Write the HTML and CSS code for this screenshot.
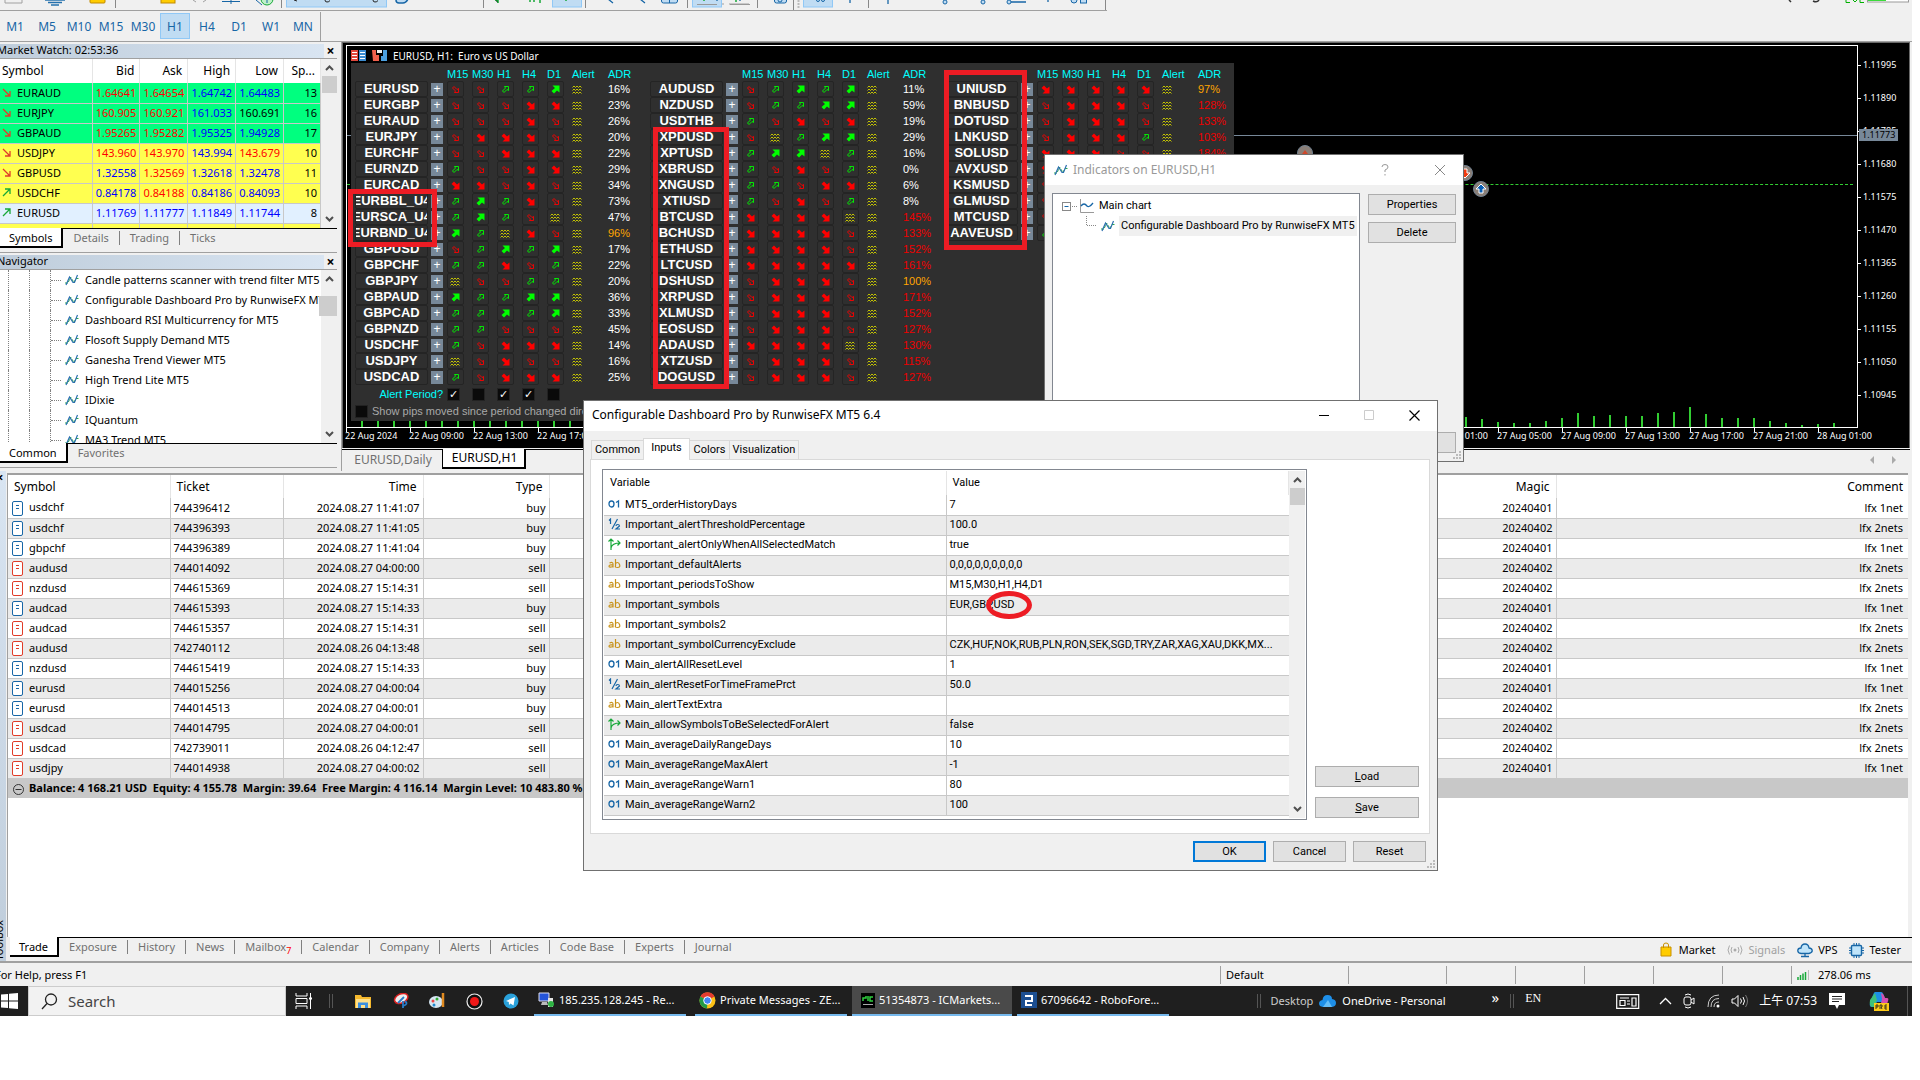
FILE: index.html
```html
<!DOCTYPE html>
<html lang="en">
<head>
<meta charset="utf-8">
<title>EURUSD,H1 - Trading Terminal</title>
<link rel="stylesheet" href="styles.css">
</head>
<body>
<svg class="defs" aria-hidden="true">
  <symbol id="r" viewBox="0 0 9 9"><path d="M1.5 3 3 1.5 6 4.5 7.500 3.500V7.500H3.500L4.500 6Z" fill="none" stroke="#f00" stroke-width=".9"/></symbol>
  <symbol id="R" viewBox="0 0 9 9"><path d="M.5 3 3 .5 6 3.500 8.500 1.500V8.500H1.500L4 6Z" fill="#f00"/></symbol>
  <symbol id="g" viewBox="0 0 9 9"><path d="M1.500 6 3 7.500 6 4.500 7.500 5.500V1.500H3.500L4.500 3Z" fill="none" stroke="#0f0" stroke-width=".9"/></symbol>
  <symbol id="G" viewBox="0 0 9 9"><path d="M.5 6 3 8.500 6 5.500 8.500 7.500V.5H1.500L4 3Z" fill="#0f0"/></symbol>
  <symbol id="w" viewBox="0 0 11 9"><path d="M.5 2.500 2 1 3.500 2.500 5 1 6.500 2.500 8 1 9.500 2.500M.5 5.500 2 4 3.500 5.500 5 4 6.500 5.500 8 4 9.500 5.500M.5 8.500 2 7 3.500 8.500 5 7 6.500 8.500 8 7 9.500 8.500" fill="none" stroke="#d2d200" stroke-width=".9"/></symbol>
  <symbol id="ind" viewBox="0 0 14 12"><path d="M0 9h3L5.500 3 9 8.500 11 4.500h3" fill="none" stroke="#2aa84a" stroke-dasharray="3 1"/><path d="M1 11 4.500 3l3.500 5.500h1.500L12.500 1" fill="none" stroke="#2c6fb0" stroke-width="1.200"/></symbol>
  <symbol id="doc" viewBox="0 0 11 15"><rect x=".5" y=".5" width="10" height="14" rx="1.500" fill="#fff" stroke="currentColor"/><path d="M4 4.500h3M4 7.500h3" stroke="currentColor"/></symbol>
  <symbol id="up" viewBox="0 0 9 6"><path d="M1 5 4.500 1.500 8 5" fill="none" stroke="#505050" stroke-width="2"/></symbol>
  <symbol id="down" viewBox="0 0 9 6"><path d="M1 1 4.500 4.500 8 1" fill="none" stroke="#505050" stroke-width="2"/></symbol>
  <symbol id="ti" viewBox="0 0 13 12"><ellipse cx="3.500" cy="6" rx="2.500" ry="3" fill="none" stroke="#1766a6" stroke-width="1.300"/><path d="M8 4.500 10.500 3v6.500" fill="none" stroke="#1766a6" stroke-width="1.300"/></symbol>
  <symbol id="td" viewBox="0 0 13 12"><path d="M1 2.500 2.500 1v5M9.500 1 4 11M8 8q0-1.500 1.700-1.500T11.500 8L8 11h4" fill="none" stroke="#1766a6" stroke-width="1.200"/></symbol>
  <symbol id="tb" viewBox="0 0 13 12"><path d="M3 12V1M.5 3.500 3 1l2.500 2.500M3 10q1-5 9-5M9.500 2.500 12 5 9.500 7.500" fill="none" stroke="#17a838" stroke-width="1.200"/></symbol>
  <symbol id="ts" viewBox="0 0 13 12"><path d="M1.500 5Q5 3.500 5 6v3.500M5 7Q1 6.500 1 8.200T5 8.500M7.500 1v8.500M7.500 6Q8 4.500 9.500 4.500T11.700 7 9.500 9.500 7.500 8" fill="none" stroke="#c8921a" stroke-width="1.200"/></symbol>
</svg>

<div class="app">
  <div class="toolbar">
    <svg width="1107" height="10" viewBox="0 0 1107 10">
      <g stroke="#a0a0a0" fill="none"><path d="M5 0v3h17V0M193 0l3 2M203 2l3-2M706 4h18M729 4h20"/></g>
      <path d="M45 0h20M48 2.500h14M51 5h8" stroke="#2571ad" stroke-width="1.500"/>
      <rect x="90" y="-5" width="15" height="8" rx="1" fill="#fc0" stroke="#c08a00"/>
      <rect x="161" y="-5" width="14" height="8" fill="#fc0" stroke="#c08a00"/>
      <path d="M222 1.500h18M231 0v4" stroke="#1766a6"/>
      <circle cx="267" cy="-1" r="6" fill="#bff0c8" stroke="#17a838"/><path d="M256 0l6 5M267-2v5" stroke="#1766a6"/>
      <path d="M115.500 0v8M281.500 0v8M483.500 0v8M585.500 0v8M687.500 0v8M757.500 0v8M793.500 0v10M868.500 0v8M1105.500 0v10" stroke="#888"/>
      <g fill="#c0dcf3" stroke="#90c8f6"><rect x="286.500" y="-3" width="100" height="10"/><rect x="552.500" y="-3" width="29" height="10"/><rect x="692.500" y="-3" width="29" height="10"/><rect x="803.500" y="-3" width="29" height="10"/></g>
      <path d="M294 0l3 1M325 0q0 2 2 2t3-1.500M373 0q0 2 2 2t3-1.500" stroke="#222" fill="none"/>
      <path d="M396 0q0 3 3 3h4q3 0 5-4" fill="#c0dcf3" stroke="#1766a6" stroke-width="1.500"/>
      <path d="M495 0h3v3M530 0v2M534 0v2M540 0v3M566 0v1M704 0v1M736 0v2" stroke="#17a838" stroke-width="1.500"/>
      <path d="M608-1l5 4M640-1l5 4M717 0v1M740 0v1M850 0v3M888 0v4M1048 0v2M1011 2h15" stroke="#1766a6" stroke-width="1.300"/>
      <path d="M697 4.500h20M730 4.500h20" stroke="#999"/>
      <g fill="#c0dcf3" stroke="#1766a6"><rect x="661.500" y="-6" width="16" height="9" rx="2"/><path d="M669.500 0v3"/><rect x="774.500" y="-6" width="12" height="9" rx="2"/><circle cx="780" cy="0" r="2"/><circle cx="818" cy="0" r="1.500"/><circle cx="823" cy="0" r="1.500"/><circle cx="945" cy="2" r="2"/><circle cx="983" cy="2" r="2"/><circle cx="1009" cy="2" r="2"/><circle cx="1074" cy="0" r="3"/><rect x="1080.500" y="-5" width="6" height="8"/></g>
      <path d="M798.500 0v9" stroke="#bbb" stroke-width="2" stroke-dasharray="2 1"/>
    </svg>
    <svg width="130" height="10" viewBox="0 0 130 10">
      <path d="M7 0l2 2M31 1q4 2 6-1" stroke="#333" fill="none" stroke-width="1.500"/><path d="M64 0v2.500h4M71 0l2 2 2-2M78 0v2.500h4" stroke="#00b000" fill="none"/>
      <rect x="85.500" y="-4" width="41" height="6" fill="#fff" stroke="#999"/><rect x="86" y="-4" width="18" height="5" fill="#3bdc3b"/>
    </svg>
  </div>
  <nav class="periods">
    <button>M1</button><button>M5</button><button>M10</button><button>M15</button><button>M30</button><button class="on">H1</button><button>H4</button><button>D1</button><button>W1</button><button>MN</button>
  </nav>

  <div class="workspace">
    <aside class="side">
      <section class="panel market">
        <header class="caption"><span>Market Watch: 02:53:36</span><button aria-label="Close">×</button></header>
        <div class="scrollbox watch">
          <table><thead><tr><th>Symbol</th><th>Bid</th><th>Ask</th><th>High</th><th>Low</th><th>Sp...</th></tr></thead><tbody id="quotes"></tbody></table>
          <div class="bar"><svg width="9" height="6"><use href="#up"/></svg><i></i><svg width="9" height="6"><use href="#down"/></svg></div>
        </div>
        <div class="tabs"><button class="on">Symbols</button><button>Details</button><button>Trading</button><button>Ticks</button></div>
      </section>
      <section class="panel navigator">
        <header class="caption"><span>Navigator</span><button aria-label="Close">×</button></header>
        <div class="scrollbox tree">
          <ul id="tree"></ul>
          <div class="bar low"><svg width="9" height="6"><use href="#up"/></svg><i></i><svg width="9" height="6"><use href="#down"/></svg></div>
        </div>
        <div class="tabs"><button class="on">Common</button><button>Favorites</button></div>
      </section>
    </aside>

    <main class="charts">
      <div class="chart">
        <div class="plot">
          <div class="priceline"></div>
          <div class="stopline"></div>
          <div class="volumes" id="volumes"></div>
          <svg class="marks" width="200" height="60" viewBox="0 0 200 60">
            <g fill="#8a7f78" stroke="#708090"><circle cx="8" cy="8" r="7.500"/><circle cx="168" cy="28" r="7.500"/><circle cx="184" cy="44" r="7.500"/></g>
            <path d="M8 5l-3 4h6Z" fill="#d0482a"/><path d="M8 9v5" stroke="#2a62a8" stroke-width="2"/><path d="M166 24h4v4h3l-5 5-5-5h3Z" fill="#f03a10" stroke="#fff"/><path d="M182 48h4v-4h3l-5-5-5 5h3Z" fill="#0a5fb4" stroke="#fff"/>
          </svg>
          <div class="plothead">
            <svg width="15" height="12" viewBox="0 0 15 12"><path d="M0 0h7v11H0Z" fill="#e0483c"/><path d="M8 0h7v11H8Z" fill="#3c8cd0"/><path d="M1 2.500h5M1 5.500h5M1 8.500h5M9 2.500h5M9 5.500h5M9 8.500h5" stroke="#fff"/></svg>
            <svg width="15" height="12" viewBox="0 0 15 12"><path d="M0 0h4v5h3v6H1Z" fill="#f0604c"/><path d="M11 0h4v11H9V6h2Z" fill="#4ca0e0"/><path d="M5 0h5v3H5Z" fill="#eee"/></svg>
            <span>EURUSD, H1:&nbsp; Euro vs US Dollar</span>
          </div>
          <div class="dash">
            <div class="groups" id="groups"></div>
            <div class="alertrow"><span>Alert Period?</span><input type="checkbox" aria-label="M15" checked><input type="checkbox" aria-label="M30"><input type="checkbox" aria-label="H1" checked><input type="checkbox" aria-label="H4" checked><input type="checkbox" aria-label="D1"></div>
            <label class="pips"><input type="checkbox">Show pips moved since period changed direction</label>
          </div>
        </div>
        <div class="prices"><span>1.11995</span><span>1.11890</span><span>1.11785</span><span>1.11680</span><span>1.11575</span><span>1.11470</span><span>1.11365</span><span>1.11260</span><span>1.11155</span><span>1.11050</span><span>1.10945</span><b>1.11773</b></div>
        <div class="times" id="times"></div>
        <div class="note n1"></div><div class="note n2"></div><div class="note n3"></div>
      </div>
      <div class="charttabs"><button>EURUSD,Daily</button><button class="on">EURUSD,H1</button><span></span><svg width="27" height="8" viewBox="0 0 27 8"><path d="M4 0v8L0 4ZM22 0v8l4-4Z" fill="#aaa"/></svg></div>
    </main>
  </div>

  <section class="toolbox">
    <div class="strip"><b>×</b><span>Toolbox</span></div>
    <div class="orders">
      <table><thead><tr><th>Symbol</th><th>Ticket</th><th>Time</th><th>Type</th><th></th><th>Magic</th><th>Comment</th></tr></thead><tbody id="orders"></tbody>
      <tfoot><tr><td colspan="7"><svg width="13" height="13" viewBox="0 0 13 13"><circle cx="6.500" cy="6.500" r="5" fill="none" stroke="#333"/><path d="M3.500 6.500h6" stroke="#333"/></svg><span>Balance: 4 168.21 USD&nbsp; Equity: 4 155.78&nbsp; Margin: 39.64&nbsp; Free Margin: 4 116.14&nbsp; Margin Level: 10 483.80 %</span></td></tr></tfoot></table>
    </div>
  </section>
  <div class="boxtabs">
    <div class="tabs"><button class="on">Trade</button><button>Exposure</button><button>History</button><button>News</button><button>Mailbox<sub>7</sub></button><button>Calendar</button><button>Company</button><button>Alerts</button><button>Articles</button><button>Code Base</button><button>Experts</button><button>Journal</button></div>
    <div class="services">
      <a href="#"><svg width="14" height="16" viewBox="0 0 14 16"><path d="M1 5h10v9H1Z" fill="#fc0" stroke="#c89000"/><path d="M3.500 6V3q0-2 2.500-2t2.500 2v3" fill="none" stroke="#c89000"/></svg>Market</a>
      <a href="#" class="off"><svg width="16" height="12" viewBox="0 0 16 12"><circle cx="8" cy="6" r="1.500" fill="#aaa"/><path d="M5 3q-2 3 0 6M2.500 1.500q-3 4.500 0 9M11 3q2 3 0 6M13.500 1.500q3 4.500 0 9" fill="none" stroke="#aaa"/></svg>Signals</a>
      <a href="#"><svg width="16" height="15" viewBox="0 0 16 15"><path d="M4 10.500Q.7 10 .8 7.500T4 5Q4.500 1 8 1t4 4q3 .3 3.200 2.500T12 10.500ZM8 11v3M4 13.500h8" fill="#bfe4fa" stroke="#1766a6" stroke-width="1.300"/></svg>VPS</a>
      <a href="#"><svg width="15" height="15" viewBox="0 0 15 15"><path d="M5 0v15M7.500 0v15M10 0v15M0 5h15M0 7.500h15M0 10h15" stroke="#1766a6"/><rect x="2.500" y="2.500" width="10" height="10" rx="1" fill="#bfe4fa" stroke="#1766a6" stroke-width="1.400"/></svg>Tester</a>
    </div>
  </div>
  <footer class="status"><span class="help">For Help, press F1</span><span class="c1">Default</span><span class="c2"></span><span class="c3"></span><span class="c3"></span><span class="c3"></span><span class="c3"></span><span class="c3"></span><span class="net"><svg width="13" height="10" viewBox="0 0 13 10"><path d="M1 10V7M3.500 10V5M6 10V3.500M8.500 10V2" stroke="#17a838" stroke-width="1.500"/><path d="M11.500 10V0" stroke="#bbb"/></svg>278.06 ms</span></footer>

  <div class="taskbar">
    <button class="start" aria-label="Start"><svg width="19" height="16" viewBox="0 0 19 16"><path d="M1 1.500 8 1v6.500H1ZM9 .8 18 0v7.500H9ZM1 8.500h7V15l-7-.5ZM9 8.500h9V16l-9-.8Z" fill="#fff"/></svg></button>
    <label class="search"><svg width="17" height="17" viewBox="0 0 17 17"><circle cx="10" cy="6.500" r="5.500" fill="none" stroke="#222" stroke-width="1.300"/><path d="M6 10.500 1 16" stroke="#222" stroke-width="1.300"/></svg><input type="text" placeholder="Search" aria-label="Search"></label>
    <div class="pins">
      <svg width="18" height="16" viewBox="0 0 18 16"><path d="M1 0v3h11V0M1 16v-3h11v3M1 5.500h11v5H1ZM15.500 0v16" fill="none" stroke="#fff"/><path d="M14 4.500h3v2h-3Z" fill="#fff"/></svg>
      <i class="grip"></i>
      <svg width="17" height="15" viewBox="0 0 17 15"><path d="M0 1h6l1 2h9v11H0Z" fill="#f5b92e"/><path d="M1 5h14v9H1Z" fill="#ffe08a"/><path d="M3 14V8.500h10V14h-3v-3H6v3Z" fill="#3b8fe0"/></svg>
      <svg width="17" height="16" viewBox="0 0 17 16"><ellipse cx="9" cy="5.500" rx="7" ry="4.500" fill="#eee" stroke="#d22" stroke-width="1.500" transform="rotate(-25 9 5)"/><path d="M6 10 12 4M11 8v7M13 8q4 3-2 5" stroke="#2a7cc8" fill="none" stroke-width="1.800"/></svg>
      <svg width="17" height="16" viewBox="0 0 17 16"><ellipse cx="7" cy="9" rx="7" ry="6" fill="#d6e6f2"/><circle cx="4" cy="8" r="1.500" fill="#e44"/><circle cx="8" cy="6" r="1.500" fill="#3a3"/><circle cx="5" cy="12" r="1.500" fill="#28c"/><path d="M14 0v14" stroke="#e08a20" stroke-width="2.500"/></svg>
      <svg width="17" height="17" viewBox="0 0 17 17"><circle cx="8.500" cy="8.500" r="7.500" fill="#111" stroke="#eee" stroke-width="1.200"/><circle cx="8.500" cy="8.500" r="4.500" fill="#f01818"/></svg>
      <svg width="16" height="16" viewBox="0 0 16 16"><circle cx="8" cy="8" r="7.500" fill="#2aa1da"/><path d="M3 8l9-4-1.500 8.500-3-2L6 12l-.2-3Z" fill="#fff"/></svg>
    </div>
    <div class="tasks">
      <button><svg width="17" height="16" viewBox="0 0 17 16"><path d="M1 1h10v8H1Z" fill="#2454d8" stroke="#dde"/><path d="M4 10h5l1 3H3Z" fill="#bbb"/><path d="M10 6h5v9h-5Z" fill="#e4e4e4"/><circle cx="13" cy="12" r="3" fill="#2fb344"/></svg>185.235.128.245 - Re...</button>
      <button><svg width="17" height="17" viewBox="0 0 17 17"><circle cx="8.500" cy="8.500" r="8" fill="#fbc116"/><path d="M8.500 8.500 1.500 4.500A8 8 0 0 1 15.500 4.500Z" fill="#e33b2e"/><path d="M8.500 8.500 1.500 4.500A8 8 0 0 0 8 16.500Z" fill="#229a48"/><circle cx="8.500" cy="8.500" r="3.800" fill="#4285f4" stroke="#fff"/></svg>Private Messages - ZE...</button>
      <button class="on"><svg width="14" height="15" viewBox="0 0 14 15"><path d="M0 0h14v15H0Z" fill="#000"/><path d="M2 8V5h3V3M7 3v5M12 4H9v4h3" stroke="#2fd03f" fill="none" stroke-width="1.500"/><path d="M2 11.500h10" stroke="#aaa"/></svg>51354873 - ICMarkets...</button>
      <button><svg width="16" height="16" viewBox="0 0 16 16"><path d="M0 0h16v16H0Z" fill="#1d4f91"/><path d="M4 4h7v5H5V13h6" stroke="#fff" fill="none" stroke-width="2"/></svg>67096642 - RoboFore...</button>
    </div>
    <div class="desk"><i class="grip"></i><span>Desktop</span><svg width="17" height="12" viewBox="0 0 17 12"><path d="M4 12Q0 11.500 0 8.500T3.500 5Q4 0 8.500 0T13 4q4 .5 4 4t-4 4Z" fill="#1e8fe8"/><path d="M4 12 9 5l4 7Z" fill="#64bdf7"/></svg><span class="lit">OneDrive - Personal</span></div>
    <div class="tray"><span class="more">»</span><i class="grip"></i><span class="lang">EN</span>
      <svg class="news" width="24" height="15" viewBox="0 0 24 15"><path d="M.7.700h22v13.600H.7ZM4 4h9M4 6.500h5v5H4ZM11 7h3M11 10h3M16 4h4v8h-4Z" fill="none" stroke="#fff" stroke-width="1.200"/></svg>
      <svg width="13" height="8" viewBox="0 0 13 8"><path d="M1 7 6.500 1.500 12 7" fill="none" stroke="#fff" stroke-width="1.300"/></svg>
      <svg width="13" height="16" viewBox="0 0 13 16"><rect x="1" y="4" width="7" height="8" rx="2" fill="none" stroke="#fff"/><path d="M8 7l3-2v6L8 9M2 2q3-2 6 0M2 14q3 2 6 0" fill="none" stroke="#fff"/></svg>
      <svg width="13" height="14" viewBox="0 0 13 14"><path d="M1 13Q1 1 12 1M4 13Q4 4.500 12 4.500M7 13q0-5 5-5" fill="none" stroke="#ccc"/><circle cx="11" cy="12" r="1.500" fill="#fff"/></svg>
      <svg width="17" height="14" viewBox="0 0 17 14"><path d="M1 5h2.500L7 1.500v11L3.500 9H1ZM9.500 4.500q2 2.500 0 5M12 3q3 4 0 8" fill="none" stroke="#fff"/><path d="M14.500 1q4 6 0 12" fill="none" stroke="#777"/></svg>
      <span class="clock">上午 07:53</span>
      <svg width="18" height="16" viewBox="0 0 18 16"><path d="M1 0h16v12h-6l-2 4-2-4H1Z" fill="#fff"/><path d="M4 3.500h10M4 6h10M4 8.500h7" stroke="#222"/></svg>
      <svg class="pilot" width="20" height="19" viewBox="0 0 20 19"><path d="M6 0h6q2 0 3 4l2 6H8L5 15H3Q0 15 1 11L4 3Q5 0 6 0Z" fill="#1b8fe4"/><path d="M12 1q3 1 4 5h2q2 0 1 3l-2 6h-6l2-8Z" fill="#d54fae"/><path d="M1 8 6 1 8 8 5 15H3Q0 14 1 8Z" fill="#3fc07a"/><path d="M5 11h15v8H5Z" fill="#ffcc18"/><path d="M7 17v-4h2v2H7M11 17v-4h2v2h-1l1 2M18 13h-2v4h2M16 15h2" stroke="#222" fill="none" stroke-width=".9"/></svg>
    </div>
  </div>
</div>

<section class="window indicators">
  <header><svg width="14" height="12"><use href="#ind"/></svg><span>Indicators on EURUSD,H1</span><svg width="8" height="12" viewBox="0 0 8 12"><path d="M1 3q0-2.500 3-2.500T7 3Q7 5 4 6v2M4 10v1.500" fill="none" stroke="#999"/></svg><svg width="12" height="12" viewBox="0 0 12 12"><path d="M1 1l10 10M11 1 1 11" stroke="#888"/></svg></header>
  <div class="body">
    <div class="list">
      <p class="root"><svg width="32" height="14" viewBox="0 0 32 14"><rect x=".5" y="3.500" width="8" height="8" fill="#fff" stroke="#888"/><path d="M2.500 7.500h4" stroke="#1766a6"/><path d="M10 7.500h5" stroke="#888" stroke-dasharray="1 1"/><path d="M18.500 0v13.500H32" fill="none" stroke="#999"/><path d="M19 7q3-4 6 0 2 2 6-3" fill="none" stroke="#1766a6" stroke-width="1.300"/></svg>Main chart</p>
      <p class="leaf"><svg width="11" height="14" viewBox="0 0 11 14"><path d="M.5 0v9.500H11" fill="none" stroke="#888" stroke-dasharray="1 1"/></svg><svg width="14" height="12"><use href="#ind"/></svg><span>Configurable Dashboard Pro by RunwiseFX MT5</span></p>
    </div>
    <div class="side-buttons"><button>Properties</button><button>Delete</button><button class="last">Close</button></div>
  </div>
  <svg class="resize" width="8" height="8" viewBox="0 0 8 8"><path d="M6 0h2v2H6ZM3 3h2v2H3ZM6 3h2v2H6ZM0 6h2v2H0ZM3 6h2v2H3ZM6 6h2v2H6Z" fill="#bbb"/></svg>
</section>

<section class="window config">
  <header><span>Configurable Dashboard Pro by RunwiseFX MT5 6.4</span><svg width="10" height="12" viewBox="0 0 10 12"><path d="M0 6.500h10" stroke="#000"/></svg><svg width="10" height="10" viewBox="0 0 10 10"><path d="M.5.500h9v9h-9Z" fill="none" stroke="#ccc"/></svg><svg width="11" height="11" viewBox="0 0 11 11"><path d="M.5.500l10 10M10.500.500l-10 10" stroke="#000" stroke-width="1.200"/></svg></header>
  <div class="pages"><button class="p1">Common</button><button class="p2 on">Inputs</button><button class="p3">Colors</button><button class="p4">Visualization</button></div>
  <div class="page">
    <div class="grid scrollbox">
      <table><thead><tr><th>Variable</th><th>Value</th></tr></thead><tbody id="vars"></tbody></table>
      <div class="bar"><svg width="9" height="6"><use href="#up"/></svg><i></i><svg width="9" height="6"><use href="#down"/></svg></div>
      <div class="ring"></div>
    </div>
    <div class="files"><button><u>L</u>oad</button><button><u>S</u>ave</button></div>
  </div>
  <div class="actions"><button class="ok">OK</button><button>Cancel</button><button>Reset</button></div>
  <svg class="resize" width="8" height="8" viewBox="0 0 8 8"><path d="M6 0h2v2H6ZM3 3h2v2H3ZM6 3h2v2H6ZM0 6h2v2H0ZM3 6h2v2H3ZM6 6h2v2H6Z" fill="#bbb"/></svg>
</section>
<script src="data.js"></script>
</body>
</html>
```
FILE: data.js
```js
const fill = (id, html) => { document.getElementById(id).innerHTML = html; };
const lines = text => text.trim().split("\n").map(l => l.trim().split(/\s+/));
const icon = (id, w, h, cls = "") => `<svg class="${cls}" width="${w}" height="${h}"><use href="#${id}"/></svg>`;

/* Quotes: row tone, direction, symbol, four prices with a colour letter, spread */
const tick = up => `<svg width="9" height="9" viewBox="0 0 9 9"><path d="${up ? "M1 8 8 1M3 1h5v5" : "M1 1l7 7M8 3v5H3"}" fill="none" stroke="${up ? "#17a838" : "#e03c28"}" stroke-width="1.300"/></svg>`;
fill("quotes", lines(`
green d EURAUD r1.64641 r1.64654 b1.64742 b1.64483 13
green d EURJPY r160.905 r160.921 b161.033 k160.691 16
green d GBPAUD r1.95265 r1.95282 b1.95325 b1.94928 17
yellow d USDJPY r143.960 r143.970 b143.994 r143.679 10
yellow d GBPUSD b1.32558 r1.32569 b1.32618 b1.32478 11
yellow u USDCHF b0.84178 r0.84188 b0.84186 b0.84093 10
blue u EURUSD b1.11769 b1.11777 b1.11849 b1.11744 8`).map(([tone, dir, sym, ...v]) => {
  const spread = v.pop();
  return `<tr class="${tone}"><td>${tick(dir === "u")}${sym}</td>${v.map(p => `<td class="c-${p[0]}">${p.slice(1)}</td>`).join("")}<td>${spread}</td></tr>`;
}).join("") + `<tr class="yellow"><td></td><td></td><td></td><td></td><td></td><td></td></tr>`);

fill("tree", ["Candle patterns scanner with trend filter MT5", "Configurable Dashboard Pro by RunwiseFX MT5", "Dashboard RSI Multicurrency for MT5", "Flosoft Supply Demand MT5", "Ganesha Trend Viewer MT5", "High Trend Lite MT5", "IDixie", "IQuantum", "MA3 Trend MT5"]
  .map(t => `<li><i></i><i></i><i class="branch"></i>${icon("ind", 14, 12)}<span>${t}</span></li>`).join(""));

/* Dashboard: symbol, one letter per period (r/g weak, R/G strong, w flat), range used */
const groups = [`
EURUSD rrggG 16
EURGBP rrrRR 23
EURAUD rrrRr 26
EURJPY rRRRr 20
EURCHF rrRRR 22
EURNZD grrRR 29
EURCAD RRrRr 34
EURBBL_U4 gGgRr 73
EURSCA_U4 gGgrw 47
EURBND_U4 GgwRr 96
GBPUSD rgGgG 17
GBPCHF ggRrg 22
GBPJPY wrrgg 20
GBPAUD GggGG 36
GBPCAD ggGgG 33
GBPNZD ggrrr 45
USDCHF grRRR 14
USDJPY wrRrr 16
USDCAD grRRR 25`, `
AUDUSD rgGgG 11
NZDUSD rggGG 59
USDTHB grRrR 19
XPDUSD rwgGG 29
XPTUSD gGGwg 16
XBRUSD grRrg 0
XNGUSD ggrRR 6
XTIUSD grRrg 8
BTCUSD RRRRw 145
BCHUSD RRRRr 133
ETHUSD RRRRr 152
LTCUSD RRRRR 161
DSHUSD rRRRr 100
XRPUSD rRRRr 171
XLMUSD rRRRr 152
EOSUSD rRRRr 127
ADAUSD RRRRw 130
XTZUSD rRRRr 115
DOGUSD rRRRr 127`, `
UNIUSD RRRRR 97
BNBUSD rRRRr 128
DOTUSD rRRRr 133
LNKUSD rRRRg 103
SOLUSD RRRrr 184
AVXUSD RRRRr 120
KSMUSD rRRRr 115
GLMUSD rRRRr 118
MTCUSD rRRRr 121
AAVEUSD gRRRr 109`];
const heat = n => n > 100 ? "hot" : n > 90 ? "warm" : "";
fill("groups", groups.map(g => `<div class="group"><div class="line head"><span></span><span></span>${["M15", "M30", "H1", "H4", "D1"].map(p => `<span>${p}</span>`).join("")}<span class="alert">Alert</span><span>ADR</span></div>${
  lines(g).map(([s, p, n]) => `<div class="line"><button class="sym"><span>${s}</span></button><button class="plus">+</button>${[...p].map(c => `<span class="cell">${icon(c, c === "w" ? 11 : 9, 9)}</span>`).join("")}<span class="alert">${icon("w", 11, 9)}</span><span class="adr ${heat(+n)}">${n}%</span></div>`).join("")}</div>`).join(""));

/* Hourly volumes and the time axis, one label every four bars */
const recent = [10, 8, 5, 4, 4, 6, 9, 14, 11, 12, 11, 11, 14, 15, 20, 13, 9, 9, 9, 6, 4, 2, 3, 4];
fill("volumes", [...Array(69).fill(6), ...recent].map(h => `<i style="height:${h}px"></i>`).join(""));
const times = ["22 Aug 2024", "22 Aug 09:00", "22 Aug 13:00", "22 Aug 17:00", "22 Aug 21:00"];
for (const d of [23, 26, 27]) for (const h of ["01", "05", "09", "13", "17", "21"]) times.push(`${d} Aug ${h}:00`);
times.push("28 Aug 01:00");
fill("times", times.map(t => `<span>${t}</span>`).join(""));

fill("orders", lines(`
usdchf 744396412 27 11:41:07 buy 1
usdchf 744396393 27 11:41:05 buy 2
gbpchf 744396389 27 11:41:04 buy 1
audusd 744014092 27 04:00:00 sell 2
nzdusd 744615369 27 15:14:31 sell 2
audcad 744615393 27 15:14:33 buy 1
audcad 744615357 27 15:14:31 sell 2
audusd 742740112 26 04:13:48 sell 2
nzdusd 744615419 27 15:14:33 buy 1
eurusd 744015256 27 04:00:04 buy 1
eurusd 744014513 27 04:00:01 buy 2
usdcad 744014795 27 04:00:01 sell 2
usdcad 742739011 26 04:12:47 sell 2
usdjpy 744014938 27 04:00:02 sell 1`).map(([s, t, d, h, type, n]) =>
  `<tr class="${type}"><td>${icon("doc", 11, 15)}${s}</td><td>${t}</td><td>2024.08.${d} ${h}</td><td>${type}</td><td></td><td>2024040${n}</td><td>lfx ${n === "1" ? "1net" : "2nets"}</td></tr>`).join(""));

fill("vars", [["i", "MT5_orderHistoryDays", "7"], ["d", "Important_alertThresholdPercentage", "100.0"], ["b", "Important_alertOnlyWhenAllSelectedMatch", "true"], ["s", "Important_defaultAlerts", "0,0,0,0,0,0,0,0,0"], ["s", "Important_periodsToShow", "M15,M30,H1,H4,D1"], ["s", "Important_symbols", "EUR,GBP,USD"], ["s", "Important_symbols2", ""], ["s", "Important_symbolCurrencyExclude", "CZK,HUF,NOK,RUB,PLN,RON,SEK,SGD,TRY,ZAR,XAG,XAU,DKK,MX..."], ["i", "Main_alertAllResetLevel", "1"], ["d", "Main_alertResetForTimeFramePrct", "50.0"], ["s", "Main_alertTextExtra", ""], ["b", "Main_allowSymbolsToBeSelectedForAlert", "false"], ["i", "Main_averageDailyRangeDays", "10"], ["i", "Main_averageRangeMaxAlert", "-1"], ["i", "Main_averageRangeWarn1", "80"], ["i", "Main_averageRangeWarn2", "100"]]
  .map(([t, k, v]) => `<tr><td>${icon("t" + t, 13, 12)}${k}</td><td>${v}</td></tr>`).join(""));
```
FILE: styles.css
```css
* { box-sizing: border-box; }
body { margin: 0; background: #fff; color: #000; font: 11px/16px "Noto Sans", "Open Sans", "Noto Sans CJK TC", sans-serif; overflow: hidden; position: relative; }
button { font: inherit; color: inherit; background: none; border: 0; padding: 0; margin: 0; }
a { color: inherit; text-decoration: none; }
svg { display: block; flex: none; }
table { border-collapse: collapse; border-spacing: 0; table-layout: fixed; width: 100%; }
th { font-weight: 400; text-align: left; }
ul, p { margin: 0; padding: 0; list-style: none; }
.defs { position: absolute; width: 0; height: 0; }
.app { margin-right: 8px; background: #f0f0f0; display: flex; flex-direction: column; }

/* Toolbars */
.toolbar { height: 12px; display: flex; justify-content: space-between; }
.toolbar svg:first-child { border-bottom: 1px solid #a0a0a0; height: 11px; }
.periods { width: 321px; height: 29px; padding-top: 1px; display: flex; border-right: 1px solid #a0a0a0; }
.periods button { width: 30px; height: 26px; margin-right: 2px; padding-top: 2px; color: #1766a6; font-size: 12px; border: 1px solid transparent; flex: none; }
.periods button.on { background: #c0dcf3; border-color: #90c8f6; }

/* Side panels */
.workspace { display: flex; border-top: 1px solid #a0a0a0; height: 430px; }
.side { width: 342px; flex: none; display: flex; flex-direction: column; border-right: 1px solid #a0a0a0; }
.panel { border-bottom: 1px solid #a0a0a0; margin-right: 4px; padding-top: 2px; }
.market { height: 211px; }
.navigator { height: 215px; }
.caption { display: flex; height: 15px; justify-content: space-between; border-bottom: 1px solid #a0a0a0; line-height: 12px; }
.caption span { flex: 1; text-indent: -3px; overflow: hidden; background: linear-gradient(90deg, #bfcddb, #d9e5f2); }
.caption button { width: 13px; font-weight: 700; font-size: 14px; line-height: 12px; }
.scrollbox { display: flex; background: #fff; overflow: hidden; }
.bar { width: 16px; flex: none; background: #f0f0f0; display: flex; flex-direction: column; align-items: center; padding: 6px 0; }
.bar i { width: 15px; height: 17px; margin: 5px 0 auto; background: #cdcdcd; }
.bar.low i { margin-top: 14px; }
.watch { height: 169px; }
.watch table { width: 321px; flex: none; }
.watch th { height: 24px; padding: 0 5px; font-size: 12px; border-right: 1px solid #e5e5e5; text-align: right; overflow: hidden; white-space: nowrap; }
.watch th:first-child { width: 92px; text-align: left; padding-left: 2px; }
.watch th:last-child { width: 37px; }
.watch td { height: 20px; padding: 0 3px; text-align: right; border: 1px solid #c8c8c8; border-width: 0 1px 1px 0; }
.watch td:first-child { text-align: left; padding-left: 2px; }
.watch td svg { display: inline-block; margin-right: 6px; }
.green { background: #00ff7f; }
.yellow { background: #ffff50; }
.blue { background: #e1f0ff; }
.c-r { color: #f00; }
.c-b { color: #00f; }
.tabs { display: flex; border-top: 1px solid #000; height: 20px; color: #707070; }
.tabs button { padding: 0 10px; height: 14px; margin-top: 2px; line-height: 14px; border-right: 1px solid #808080; }
.tabs button:last-child { border: 0; }
.tabs button.on { margin-top: -1px; padding: 0 9px; height: 20px; line-height: 19px; background: #fff; color: #000; border: 1px solid #000; border-width: 0 2px 2px 0; }
.tabs sub { color: #f00; font-size: 9px; line-height: 0; }
.tree { height: 173px; }
.tree ul { width: 321px; flex: none; overflow: hidden; }
.tree li { height: 20px; display: flex; align-items: center; white-space: nowrap; }
.tree i { width: 21px; height: 20px; flex: none; border-right: 1px dotted #808080; }
.tree i:first-child { width: 9px; }
.tree li svg { margin: 0 6px 0 14px; }
.tree .branch { position: relative; }
.tree .branch::after { content: ""; position: absolute; left: 21px; top: 10px; width: 10px; border-top: 1px dotted #808080; }

/* Chart */
.charts { flex: 1; min-width: 0; margin-right: 2px; }
.chart { position: relative; height: 406px; background: #000; border: 1px solid #696969; border-bottom: 0; color: #fff; display: grid; grid-template: 385px 20px / 1fr 51px; overflow: hidden; }
.plot { position: relative; margin: 2px 0 0 3px; border: 1px solid #fff; overflow: hidden; }
.plothead { display: flex; align-items: center; gap: 6px; height: 18px; padding: 2px 0 0 4px; }
.plothead span { font-size: 10px; }
.priceline { position: absolute; left: 0; right: 0; top: 89px; border-top: 1px solid #778899; }
.stopline { position: absolute; left: 0; right: 4px; top: 138px; border-top: 1px dashed #32cd32; }
.volumes { position: absolute; left: 14px; bottom: 0; display: flex; align-items: flex-end; }
.volumes i { width: 2px; margin-right: 14px; background: #32cd32; flex: none; }
.marks { position: absolute; right: 360px; top: 99px; }
.prices { position: relative; display: flex; flex-direction: column; gap: 17px; padding-top: 14px; font-size: 9px; }
.prices span { height: 16px; padding-left: 5px; display: flex; align-items: center; }
.prices span::before { content: ""; width: 3px; margin-left: -5px; margin-right: 2px; border-top: 1px solid #fff; }
.prices b { position: absolute; left: 1px; top: 86px; padding: 0 3px; font-weight: 400; line-height: 12px; background: #778899; color: #000; }
.times { grid-column: 1 / 3; display: flex; padding-left: 2px; font-size: 9px; line-height: 16px; }
.times span { width: 64px; flex: none; white-space: nowrap; position: relative; }
.times span::before { content: ""; position: absolute; left: 1px; top: 0; height: 4px; border-left: 1px solid #fff; }
.dash { position: absolute; left: 4px; top: 17px; width: 883px; height: 358px; background: #2f2f2f; padding: 2px 4px; font: 11px/16px "Liberation Sans", Arial, sans-serif; }
.groups { display: flex; gap: 5px; }
.group { width: 290px; flex: none; }
.line { display: grid; grid-template-columns: 76px 16px repeat(5, 25px) 36px 1fr; height: 16px; align-items: center; white-space: nowrap; }
.line.head { color: #0ff; line-height: 18px; }
.sym { width: 73px; height: 16px; border: 1px solid #242424; border-radius: 2px; font-size: 13px; font-weight: 700; line-height: 14px; overflow: hidden; display: flex; justify-content: center; }
.plus { width: 12px; height: 13px; background: #778899; font-size: 12px; line-height: 12px; color: #fff; }
.cell { width: 17px; height: 16px; border: 1px solid #242424; border-radius: 2px; display: grid; place-items: center; }
.adr.hot { color: #e00; }
.adr.warm { color: #ffa500; }
.alertrow { display: flex; align-items: center; height: 18px; color: #0ff; }
.alertrow span { width: 92px; padding-right: 4px; text-align: right; }
.dash input { appearance: none; width: 13px; height: 13px; margin: 0 12px 0 0; background: #0a0a0a; border: 1px solid #222; display: grid; place-items: center; }
.dash input:checked::before { content: "✓"; color: #fff; font: 11px/12px "DejaVu Sans", sans-serif; }
.pips { display: flex; align-items: center; color: #a9a9a9; height: 16px; width: 300px; overflow: hidden; white-space: nowrap; }
.pips input { margin-right: 4px; }
.note { position: absolute; border: 5px solid #ed1c24; }
.n1 { left: 5px; top: 146px; width: 89px; height: 58px; }
.n2 { left: 310px; top: 84px; width: 76px; height: 262px; }
.n3 { left: 601px; top: 27px; width: 83px; height: 180px; }
.charttabs { display: flex; height: 22px; margin-top: 1px; color: #707070; line-height: 18px; }
.charttabs button, .charttabs span { border-top: 1px solid #000; height: 21px; }
.charttabs button { width: 100px; padding-left: 2px; font-size: 12px; }
.charttabs button.on { width: 84px; height: 20px; background: #fff; color: #000; border: 1px solid #000; border-width: 0 2px 2px 1px; }
.charttabs span { flex: 1; }
.charttabs svg { border-top: 1px solid #000; height: 21px; width: 40px; padding: 6px 13px 6px 0; overflow: visible; }

/* Toolbox */
.toolbox { display: flex; height: 466px; }
.strip { width: 7px; flex: none; margin-bottom: -24px; overflow: hidden; background: linear-gradient(#d9e5f2, #bfcddb); border-right: 1px solid #f0f0f0; display: flex; flex-direction: column; justify-content: space-between; }
.strip b { line-height: 12px; font-size: 13px; margin-left: -4px; }
.strip span { writing-mode: vertical-rl; transform: rotate(180deg); margin-left: -9px; width: 16px; }
.orders { flex: 1; min-width: 0; background: #fff; border: 1px solid #a0a0a0; border-width: 2px 0 0 1px; margin: 2px 4px 0 0; }
.orders th { height: 23px; padding: 0 6px; font-size: 12px; border-right: 1px solid #e5e5e5; }
.orders td { height: 20px; padding: 0 3px; border: 1px solid #c8c8c8; border-width: 0 1px 1px 0; }
.orders td:last-child, .orders th:last-child { border-right: 0; padding-right: 5px; }
.orders :is(th, td):nth-child(n+3) { text-align: right; }
.orders th:nth-child(1) { width: 162px; }
.orders th:nth-child(2) { width: 113px; }
.orders th:nth-child(3) { width: 140px; }
.orders th:nth-child(4) { width: 126px; }
.orders th:nth-child(6) { width: 140px; }
.orders th:nth-child(7) { width: 352px; }
.orders tbody tr:nth-child(even) { background: #ebebeb; }
.orders td svg { display: inline-block; vertical-align: middle; margin: 0 6px 0 1px; }
.buy svg { color: #1766a6; }
.sell svg { color: #e03c28; }
.orders tfoot td { height: 20px; background: #c8c8c8; border: 0; font-weight: 700; white-space: nowrap; }
.orders tfoot svg { margin-right: 4px; }
.boxtabs { display: flex; justify-content: space-between; height: 26px; border-bottom: 2px solid #a0a0a0; padding-left: 10px; }
.boxtabs .tabs { flex: 1; }
.services { display: flex; gap: 12px; padding: 4px 11px 0 0; border-top: 1px solid #000; }
.services a { display: flex; gap: 5px; align-items: center; height: 16px; }
.services .off { color: #a0a0a0; }

.status { display: flex; height: 23px; padding: 3px 0 2px; line-height: 18px; }
.status span { border-left: 1px solid #a0a0a0; padding-left: 5px; white-space: nowrap; }
.status .help { flex: 1; border: 0; padding: 0; text-indent: -5px; overflow: hidden; }
.status .c1 { width: 128px; }
.status .c2 { width: 98px; }
.status .c3 { width: 69px; }
.status .net { width: 121px; display: flex; align-items: center; gap: 8px; }

/* Taskbar */
.taskbar { display: flex; height: 30px; background: #1f1f1f; color: #fff; align-items: stretch; }
.start { width: 28px; flex: none; }
.search { width: 258px; flex: none; display: flex; align-items: center; gap: 10px; padding-left: 12px; background: #f2f2f2; border: 1px solid #ccc; }
.search input { border: 0; background: none; outline: 0; width: 200px; padding: 0; font: 15px/20px "Noto Sans", sans-serif; }
.search input::placeholder { color: #444; opacity: 1; }
.pins { display: flex; align-items: center; gap: 20px; padding: 0 15px 0 9px; }
.pins .grip { margin: 0 2px 0 -4px; }
.grip { width: 4px; height: 14px; border: 1px solid #555; border-width: 0 1px; flex: none; align-self: center; }
.tasks { display: flex; gap: 9px; }
.tasks button { width: 152px; padding-left: 4px; display: flex; align-items: center; gap: 4px; border-bottom: 2px solid #76b9ed; white-space: nowrap; }
.tasks button.on { background: #4a4a4a; width: 160px; margin: 0 -4px; padding-left: 9px; }
.desk { flex: 1; display: flex; align-items: center; justify-content: flex-end; gap: 6px; color: #ccc; margin-right: 46px; white-space: nowrap; }
.desk .grip { margin-right: 4px; }
.desk .lit { color: #fff; }
.tray { display: flex; align-items: center; gap: 11px; padding-right: 18px; margin-right: 4px; border-right: 1px solid #555; white-space: nowrap; }
.tray .more { font-size: 15px; line-height: 10px; margin-bottom: 8px; }
.lang { font: 12px "Liberation Serif", serif; margin-bottom: 6px; }
.clock { font-size: 12px; }
.news { margin: 0 8px 0 64px; }
.pilot { margin-left: 12px; }

/* Windows */
.window { position: absolute; background: #f0f0f0; border: 1px solid #707070; font: 11px/16px Roboto, "Noto Sans", sans-serif; }
.window header { height: 30px; background: #fff; display: flex; align-items: center; font: 12px/16px "Noto Sans", sans-serif; padding-bottom: 2px; }
.window header span { flex: 1; }
.window button { height: 21px; border: 1px solid #adadad; background: #e1e1e1; }
.resize { position: absolute; right: 2px; bottom: 2px; }
.indicators { left: 1044px; top: 154px; width: 420px; height: 308px; }
.indicators header { color: #999; padding: 0 17px 0 9px; gap: 5px; }
.indicators header svg:nth-of-type(2) { margin-right: 5px; }
.indicators header svg:last-child { margin-left: 35px; }
.indicators .body { display: flex; padding: 8px 7px 8px; gap: 8px; height: 276px; }
.list { flex: 1; min-width: 0; background: #fff; border: 1px solid #828790; padding: 2px 2px 2px 9px; }
.list p { display: flex; align-items: center; height: 20px; white-space: nowrap; }
.list .root svg { margin-right: 5px; }
.list .leaf { padding-left: 24px; gap: 4px; }
.leaf svg:first-child { align-self: flex-start; }
.leaf span { background: #f0f0f0; line-height: 20px; padding: 0 2px; }
.side-buttons { width: 88px; flex: none; display: flex; flex-direction: column; gap: 7px; padding-top: 1px; }
.side-buttons .last { margin-top: auto; }
.config { left: 583px; top: 400px; width: 855px; height: 471px; }
.config header { padding-left: 8px; padding-right: 17px; }
.config header svg { margin-left: 35px; }
.pages { display: flex; align-items: flex-end; height: 28px; padding-left: 7px; }
.pages button { height: 19px; border: 1px solid #d9d9d9; border-width: 1px 1px 0; margin-right: -1px; background: #f0f0f0; }
.pages button.on { height: 22px; padding-bottom: 3px; background: #fff; margin-bottom: -1px; position: relative; }
.p1 { width: 53px; }
.p2 { width: 47px; }
.p3 { width: 41px; }
.p4 { width: 70px; }
.page { margin: 0 7px 0 6px; height: 375px; background: #fff; border: 1px solid #d9d9d9; display: flex; padding: 9px 10px 13px 11px; gap: 8px; }
.grid { position: relative; flex: 1; border: 1px solid #828790; padding: 1px; overflow: visible; }
.grid table { flex: 1; align-self: flex-start; }
.grid th { height: 24px; padding-left: 6px; border-right: 1px solid #e5e5e5; }
.grid th:first-child { width: 342px; }
.grid td { height: 20px; padding: 0 3px; border: 1px solid #c8c8c8; border-width: 0 0 1px 1px; white-space: nowrap; overflow: hidden; }
.grid td:first-child { border-left: 0; }
.grid tbody tr:nth-child(even) { background: #ebebeb; }
.grid td svg { display: inline-block; vertical-align: middle; margin: -2px 4px 0 1px; }
.ring { position: absolute; left: 383px; top: 121px; width: 46px; height: 28px; border: 5px solid #ed1c24; border-radius: 50%; }
.files { width: 104px; display: flex; flex-direction: column; justify-content: flex-end; gap: 10px; padding-bottom: 2px; }
.actions { display: flex; justify-content: flex-end; gap: 7px; padding: 7px 11px 0 0; }
.actions button { width: 73px; }
.actions .ok { border: 2px solid #0078d7; }
```
